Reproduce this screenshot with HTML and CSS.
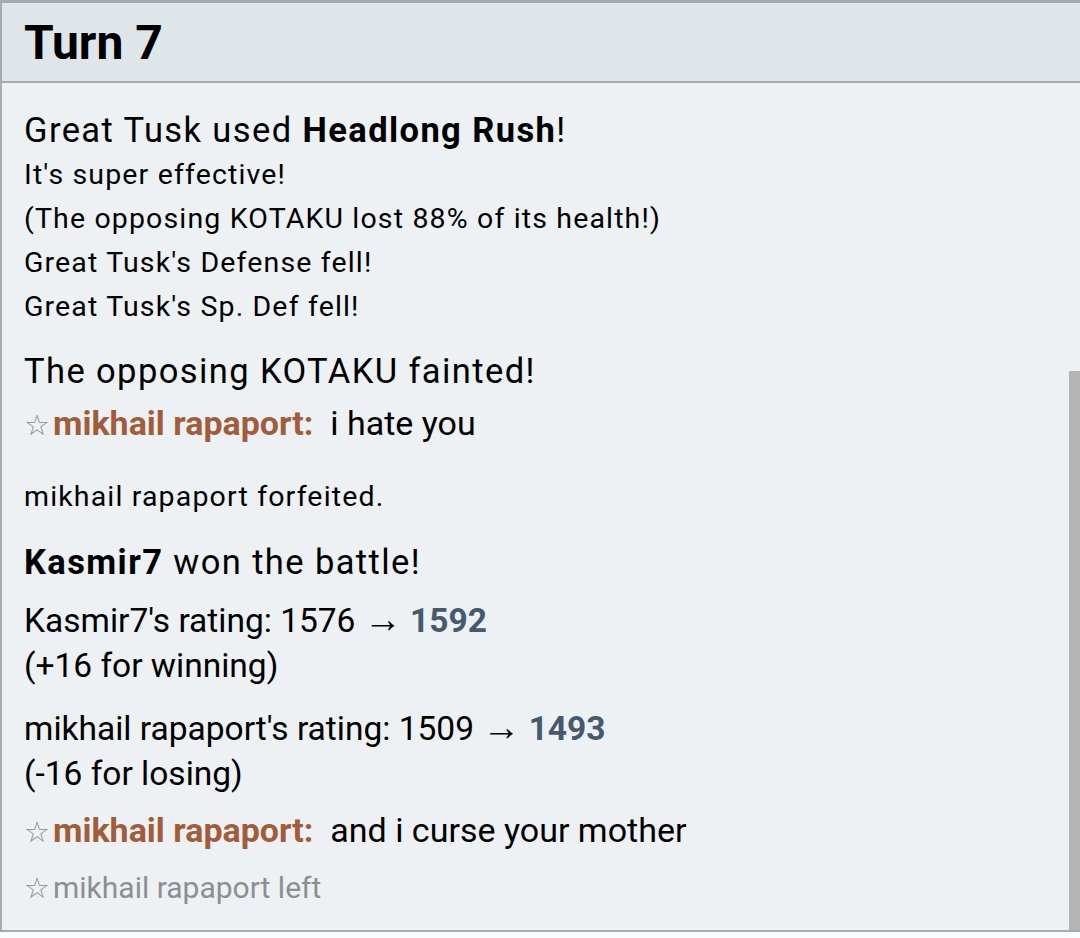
FILE: index.html
```html
<!DOCTYPE html>
<html>
<head>
<meta charset="utf-8">
<link rel="stylesheet" href="styles.css">
</head>
<body>
<div class="panel">
  <div class="turn-head"><h2 class="turn-title">Turn 7</h2></div>
  <div class="log">
    <div class="line big">Great Tusk used <strong>Headlong Rush</strong>!</div>
    <div class="line small">It's super effective!</div>
    <div class="line small">(The opposing KOTAKU lost 88% of its health!)</div>
    <div class="line small">Great Tusk's Defense fell!</div>
    <div class="line small">Great Tusk's Sp. Def fell!</div>
    <div class="line big m19">The opposing KOTAKU fainted!</div>
    <div class="line chat m6"><span class="star">☆</span><strong class="name">mikhail rapaport:</strong>&nbsp; i hate you</div>
    <div class="line small m27">mikhail rapaport forfeited.</div>
    <div class="line big m20"><strong>Kasmir7</strong> won the battle!</div>
    <div class="line rate m13">Kasmir7's rating: 1576 <span class="arrow">→</span> <strong class="rating">1592</strong></div>
    <div class="line rate">(+16 for winning)</div>
    <div class="line rate m18">mikhail rapaport's rating: 1509 <span class="arrow">→</span> <strong class="rating">1493</strong></div>
    <div class="line rate">(-16 for losing)</div>
    <div class="line chat m11"><span class="star">☆</span><strong class="name">mikhail rapaport:</strong>&nbsp; and i curse your mother</div>
    <div class="line left m10"><span class="star">☆</span>mikhail rapaport left</div>
  </div>
  <div class="scrollbar"></div>
</div>
</body>
</html>
```

FILE: styles.css
```css
html, body {
  margin: 0;
  padding: 0;
  background: #fbfcfd;
  font-family: Roboto, "Liberation Sans", sans-serif;
  color: #000;
}
.panel {
  position: relative;
  width: 1080px;
  height: 932px;
  box-sizing: border-box;
  border-top: 3px solid #a7abae;
  border-left: 2px solid #a7abae;
  border-bottom: 2px solid #a7abae;
  background: #edf1f4;
  overflow: hidden;
}
.turn-head {
  height: 78px;
  background: #dfe6ea;
  border-bottom: 2px solid #a7abae;
  display: flex;
  align-items: center;
  padding-left: 22px;
}
.turn-title {
  margin: 0;
  font-size: 48px;
  font-weight: 700;
}
.log {
  padding: 24px 0 0 22px;
}
.line { white-space: nowrap; }
.big { font-size: 34.5px; line-height: 46px; letter-spacing: 1.4px; }
.small { font-size: 28.5px; line-height: 44px; letter-spacing: 1.15px; }
.chat { font-size: 34px; line-height: 46px; }
.rate { font-size: 33.5px; line-height: 45px; }
.left { font-size: 30px; line-height: 46px; color: #8c8f92; }
.m6 { margin-top: 6px; }
.m10 { margin-top: 10px; }
.m11 { margin-top: 11px; }
.m13 { margin-top: 13px; }
.m18 { margin-top: 18px; }
.m19 { margin-top: 19px; }
.m20 { margin-top: 20px; }
.m27 { margin-top: 27px; }
.star {
  color: #8a8d90;
  font-size: 29px;
  font-weight: 400;
  margin-right: 3px;
}
.name { color: #a15d3a; }
.rating { color: #455a6c; }
.arrow { font-size: 38px; line-height: 0; }
.scrollbar {
  position: absolute;
  right: 0;
  top: 368px;
  width: 11px;
  bottom: 0;
  background: #b4b4b4;
}
```
